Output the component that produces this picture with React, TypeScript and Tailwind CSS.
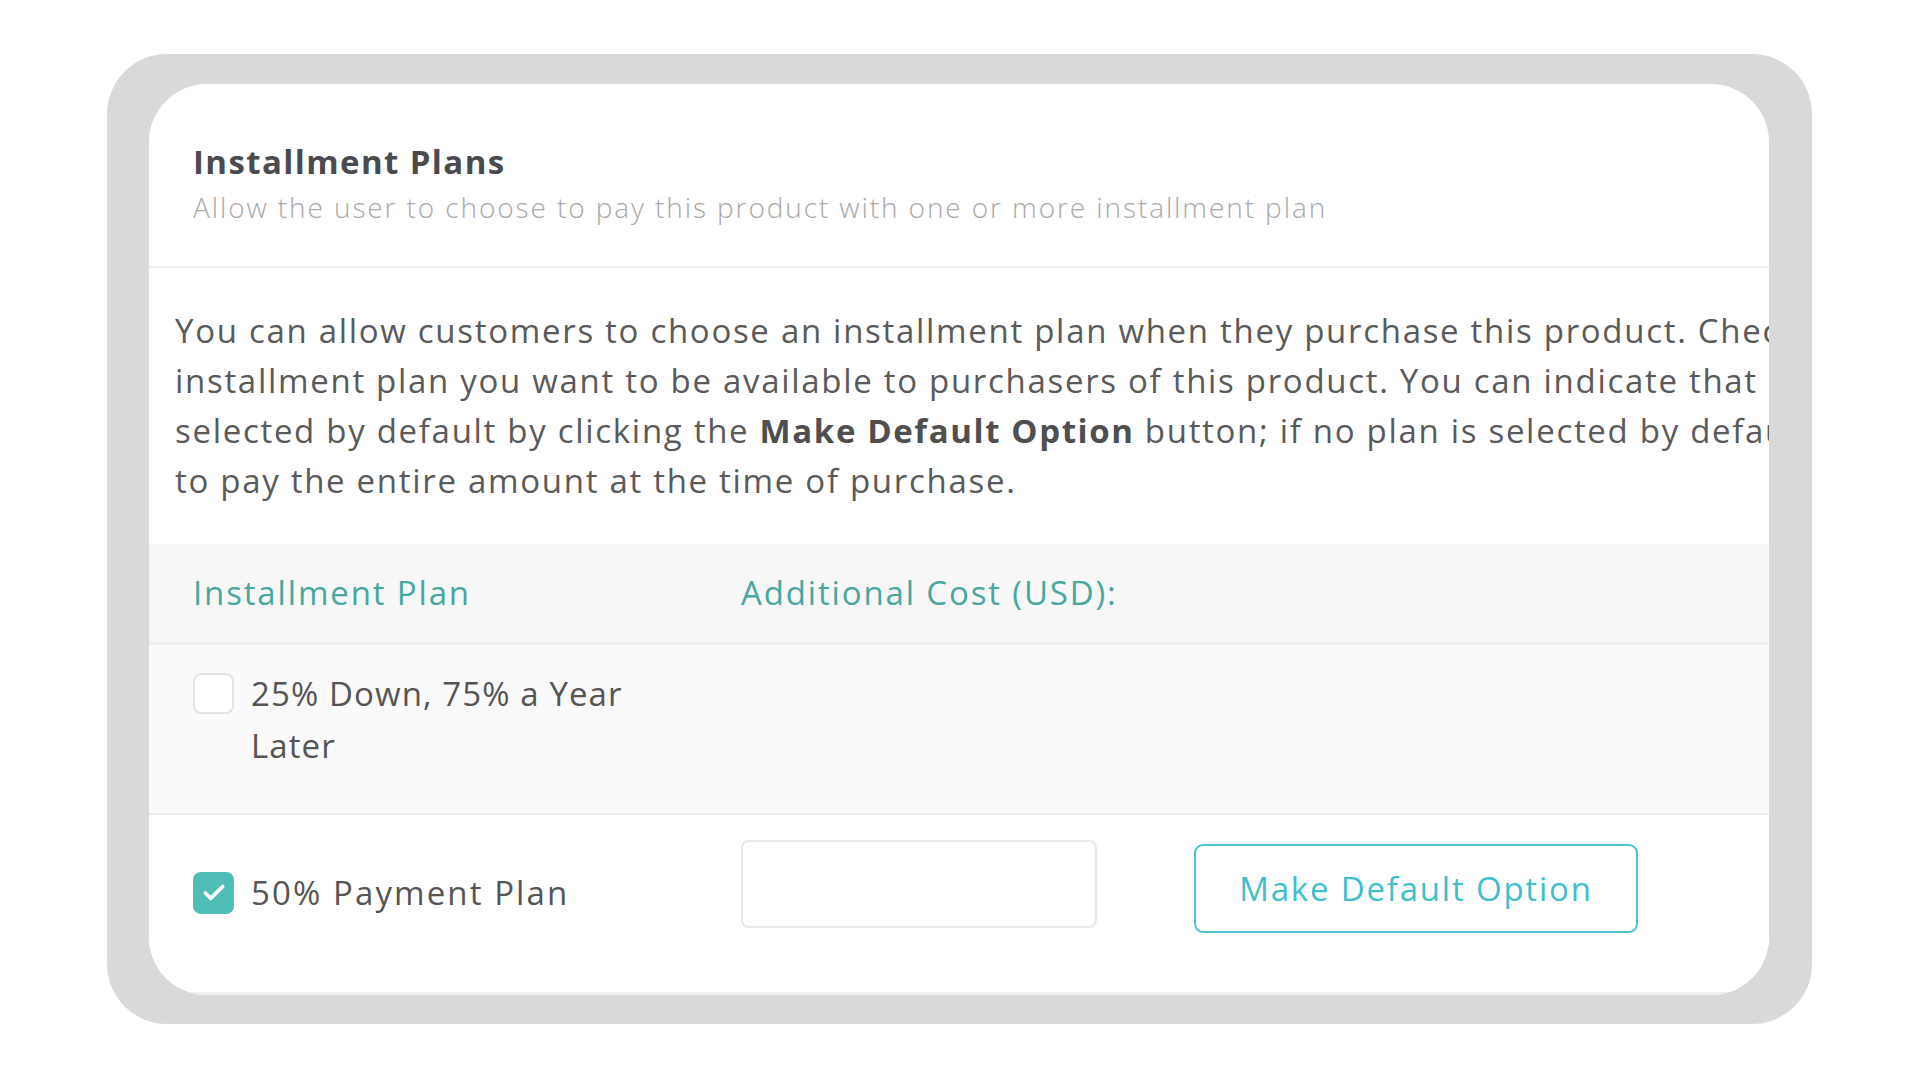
import React from "react";
import { Check } from "lucide-react";

const font = { fontFamily: '"Open Sans", "Liberation Sans", sans-serif' };

const App: React.FC = () => {
  return (
    <div className="w-[1920px] h-[1080px] bg-white" style={font}>
      <div className="pt-[54px] pl-[107px]">
        <div className="w-[1705px] h-[970px] bg-[#d9d9d9] rounded-[60px] pt-[30px] pl-[42px] pr-[43px]">
          <div className="h-[911px] bg-white rounded-[58px] overflow-hidden">
            {/* Header */}
            <div className="pl-[44px] pt-[58px] pb-[39px] border-b-2 border-[#efefef]">
              <div className="text-[33px] leading-[40px] font-bold tracking-[1.4px] text-[#4a4a4f]">
                Installment Plans
              </div>
              <div className="mt-[5px] text-[28px] leading-[40px] font-light tracking-[1.9px] text-[#a9a9a9] whitespace-nowrap">
                Allow the user to choose to pay this product with one or more installment plan
              </div>
            </div>

            {/* Description */}
            <div className="pl-[26px] pt-[38px] pb-[38px] text-[33px] leading-[50px] tracking-[1.7px] text-[#5a5a5a] whitespace-nowrap">
              <div>You can allow customers to choose an installment plan when they purchase this product. Check each</div>
              <div>installment plan you want to be available to purchasers of this product. You can indicate that an installment plan should be</div>
              <div>
                selected by default by clicking the <span className="font-bold tracking-[1.6px] text-[#4f4f4f]">Make Default Option</span> button; if no plan is selected by default, customers will be expected
              </div>
              <div>to pay the entire amount at the time of purchase.</div>
            </div>

            {/* Table header */}
            <div className="h-[101px] bg-[#f7f7f7] border-b-[3px] border-[#eeeeee] flex items-center pl-[44px] text-[33px] tracking-[1.85px] text-[#48a89f]">
              <div className="w-[548px]">Installment Plan</div>
              <div>Additional Cost (USD):</div>
            </div>

            {/* Row 1 */}
            <div className="h-[170px] bg-[#fafafa] border-b-2 border-[#eeeeee] flex items-start pl-[44px] pt-[23px] text-[33px] leading-[52px] tracking-[1.1px] text-[#555555]">
              <div className="w-[548px] flex items-start gap-[17px]">
                <div className="mt-[5px] w-[41px] h-[41px] shrink-0 rounded-[8px] border-2 border-[#e4e4e4] bg-white" />
                <div>
                  25% Down, 75% a Year
                  <br />
                  Later
                </div>
              </div>
            </div>

            {/* Row 2 */}
            <div className="h-[180px] bg-white border-b-[3px] border-[#efefef] flex items-start pl-[44px] pt-[25px] text-[33px] leading-[52px] tracking-[2.1px] text-[#555555]">
              <div className="w-[548px] flex items-start gap-[17px] pt-[32px]">
                <div className="w-[41px] h-[42px] shrink-0 rounded-[8px] bg-[#4dbdb5] flex items-center justify-center">
                  <Check className="w-[26px] h-[26px] text-white" strokeWidth={3.5} />
                </div>
                <div className="-mt-[5px]">50% Payment Plan</div>
              </div>
              <div className="w-[356px] h-[88px] rounded-[8px] border-2 border-[#e8e8e8] bg-white" />
              <button className="ml-[97px] mt-[4px] w-[444px] h-[89px] rounded-[9px] border-2 border-[#4cc3cf] text-[#3fbfcb] text-[33px] tracking-[1.8px] bg-white">
                Make Default Option
              </button>
            </div>
          </div>
        </div>
      </div>
    </div>
  );
};

export default App;
